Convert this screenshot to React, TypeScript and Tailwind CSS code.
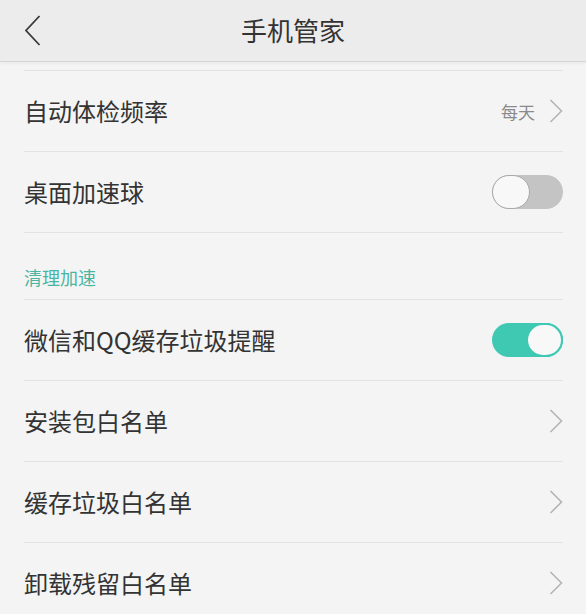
import React from "react";

const Chevron = () => (
  <svg width="14" height="26" viewBox="0 0 14 26" className="block">
    <polyline points="1.5,2 12.5,13 1.5,24" fill="none" stroke="#b4b4b4" strokeWidth="1.6" />
  </svg>
);

const Toggle = ({ on }: { on: boolean }) =>
  on ? (
    <div className="w-[71px] h-[34px] rounded-full bg-[#3fc8b2] flex items-center justify-end">
      <div className="w-[37px] h-[34px] rounded-full bg-[#f8f8f8] border-[2px] border-[#3fc8b2]" />
    </div>
  ) : (
    <div className="w-[71px] h-[34px] rounded-full bg-[#c4c4c4] flex items-center justify-start">
      <div className="w-[38px] h-[34px] rounded-full bg-[#f8f8f8] border-[1.5px] border-[#a9a9a9]" />
    </div>
  );

const Row = ({ label, right }: { label: string; right: React.ReactNode }) => (
  <div className="h-[81px] border-t border-[#e2e2e2] flex items-center justify-between">
    <span className="text-[24px] text-[#333333] leading-none">{label}</span>
    {right}
  </div>
);

export default function App() {
  return (
    <div
      className="w-[586px] h-[614px] bg-[#f4f4f4] overflow-hidden"
      style={{ fontFamily: '"Noto Sans CJK SC", "Noto Sans", sans-serif' }}
    >
      <div className="h-[62px] bg-[#ececec] border-b border-[#d6d6d6] shadow-[0_2px_3px_rgba(0,0,0,0.04)] flex items-center relative">
        <div className="pl-[24px] flex items-center">
          <svg width="17" height="31" viewBox="0 0 17 31">
            <polyline points="15.5,1 2,15.5 15.5,30" fill="none" stroke="#3a3a3a" strokeWidth="1.8" />
          </svg>
        </div>
        <div className="absolute inset-0 flex items-center justify-center pb-[2px]">
          <span className="text-[26px] text-[#333333] leading-none">手机管家</span>
        </div>
      </div>
      <div className="pl-[24px] pr-[23px] pt-[8px]">
        <Row
          label="自动体检频率"
          right={
            <div className="flex items-center gap-[14px]">
              <span className="text-[17px] text-[#8a8a8a] leading-none">每天</span>
              <Chevron />
            </div>
          }
        />
        <Row label="桌面加速球" right={<Toggle on={false} />} />
        <div className="h-[67px] border-t border-[#e2e2e2] flex items-end pb-[13px]">
          <span className="text-[18px] text-[#4ab5a3] leading-none">清理加速</span>
        </div>
        <Row label="微信和QQ缓存垃圾提醒" right={<Toggle on={true} />} />
        <Row label="安装包白名单" right={<Chevron />} />
        <Row label="缓存垃圾白名单" right={<Chevron />} />
        <Row label="卸载残留白名单" right={<Chevron />} />
      </div>
    </div>
  );
}
